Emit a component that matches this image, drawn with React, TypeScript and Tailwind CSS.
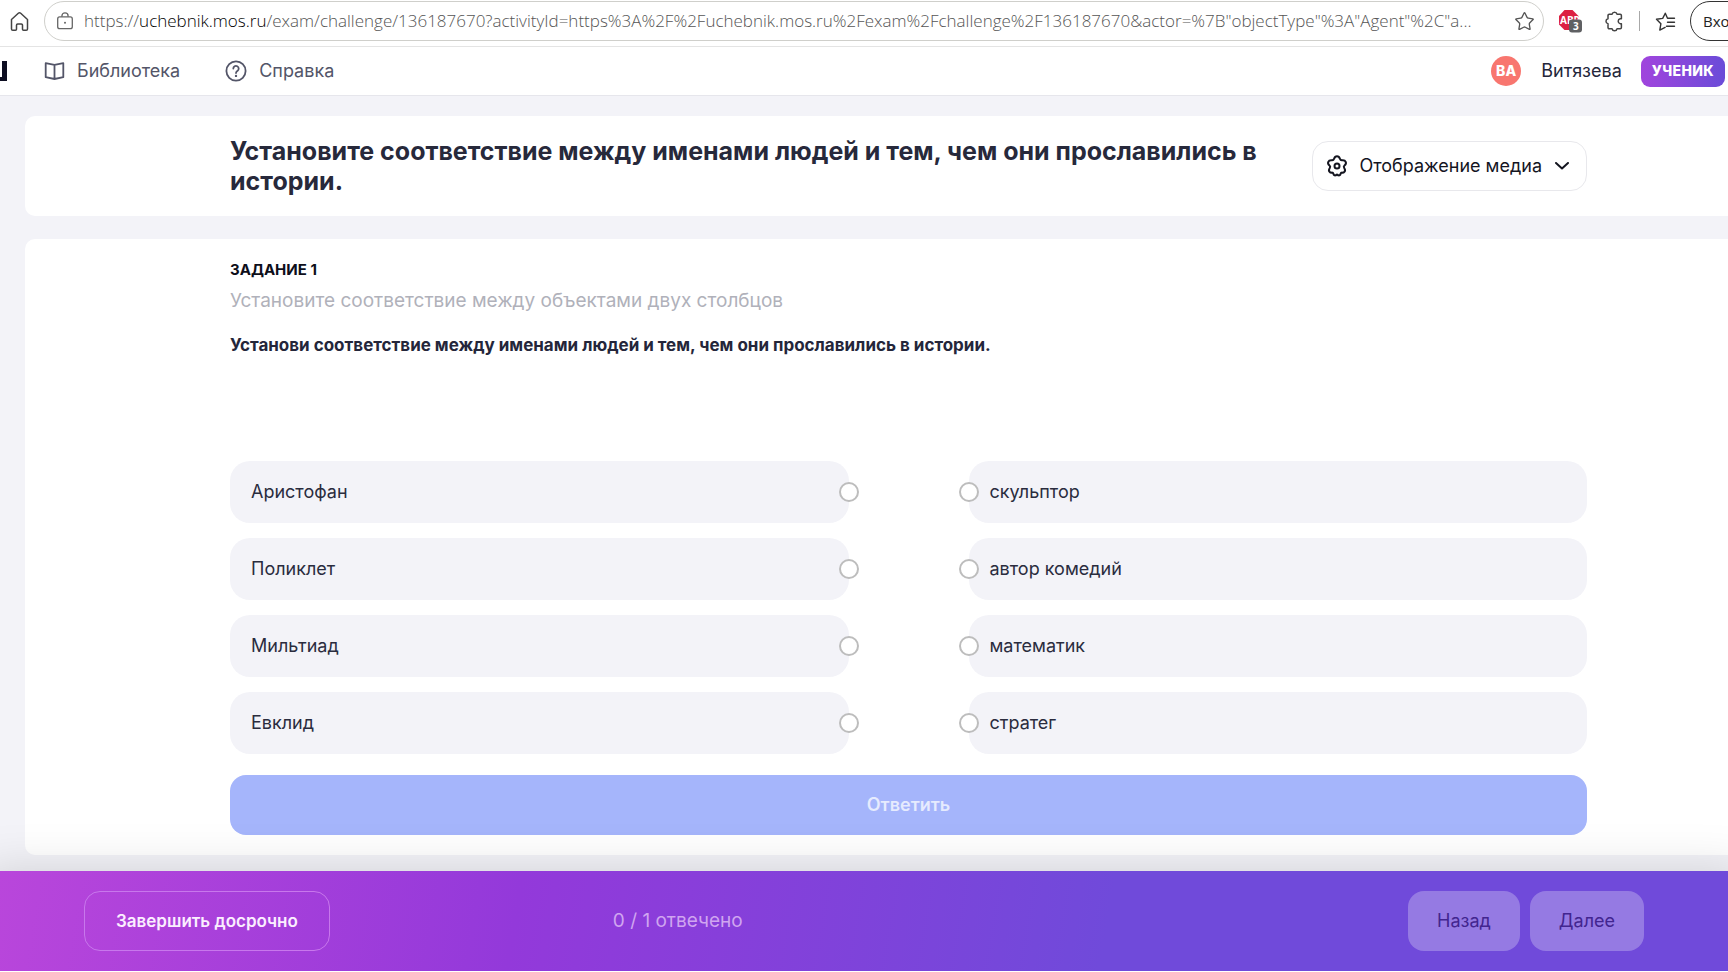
import { Star } from 'lucide-react';

const PAIRS = [
  { left: 'Аристофан', right: 'скульптор' },
  { left: 'Поликлет', right: 'автор комедий' },
  { left: 'Мильтиад', right: 'математик' },
  { left: 'Евклид', right: 'стратег' },
];

function AdblockIcon() {
  return (
    <svg viewBox="0 0 24 24" className="w-6 h-6 shrink-0">
      <path d="M6.500 1h8l6 6v8.500l-6 5.500h-8l-5.500-5.500V7z" fill="#dc2142" />
      <text x="2" y="15" fontSize="10" fontWeight="700" fill="#fff" fontFamily="Open Sans, sans-serif">ABP</text>
      <rect x="11" y="10.500" width="13" height="13" rx="3" fill="#5f6063" />
      <text x="15" y="21" fontSize="10" fontWeight="700" fill="#fff" fontFamily="Open Sans, sans-serif">3</text>
    </svg>
  );
}

function BrowserBar() {
  return (
    <div className="flex items-center h-[47px] pb-1 border-b border-[#e4e4e4] bg-white overflow-hidden font-['Open_Sans',sans-serif]">
      <button aria-label="Домой" className="ml-[9px] mr-[14px] shrink-0">
        <svg viewBox="0 0 21 21" className="w-[21px] h-[21px]" fill="none" stroke="#444" strokeWidth="1.500" strokeLinejoin="round">
          <path d="M2.500 8.500 9.300 2.300a1.800 1.800 0 0 1 2.400 0l6.800 6.200V18a1.300 1.300 0 0 1-1.300 1.300h-2.700a1 1 0 0 1-1-1v-4.100a1.200 1.200 0 0 0-1.200-1.200H8.700a1.200 1.200 0 0 0-1.200 1.200v4.100a1 1 0 0 1-1 1H3.800A1.300 1.300 0 0 1 2.500 18z" />
        </svg>
      </button>
      <div className="flex flex-1 min-w-0 items-center h-10 pl-[11px] pr-2 rounded-full border border-[#cfcfcb]">
        <svg viewBox="0 0 18 18" className="w-[18px] h-[18px] shrink-0" fill="none" stroke="#666" strokeWidth="1.300">
          <rect x="1.700" y="4.900" width="14.600" height="11.800" rx="2" />
          <path d="M5.900 4.700V3.900a3.100 3.100 0 0 1 6.200 0v.8" />
          <circle cx="9" cy="10.800" r="1" fill="#666" stroke="none" />
        </svg>
        <div role="textbox" aria-label="Адрес" className="flex-1 min-w-0 ml-[10px] text-[17px] leading-6 font-[350] whitespace-nowrap text-[#555]">
          https://<span className="text-black">uchebnik.mos.ru</span>
          {'/exam/challenge/136187670?activityId=https%3A%2F%2Fuchebnik.mos.ru%2Fexam%2Fchallenge%2F136187670&actor=%7B"objectType"%3A"Agent"%2C"a...'}
        </div>
        <button aria-label="Добавить в избранное" className="shrink-0">
          <Star className="w-[21px] h-[21px] text-[#555]" strokeWidth={1.5} />
        </button>
      </div>
      <div className="flex items-center shrink-0 ml-[14px]">
        <AdblockIcon />
        <button aria-label="Расширения" className="ml-[22px]">
          <svg viewBox="0 0 21 21" className="w-[21px] h-[21px]" fill="none" stroke="#444" strokeWidth="1.500" strokeLinejoin="round">
            <path d="M5.200 3.200h2.900a2.500 2.500 0 0 1 4.900 0h3.200a1.200 1.200 0 0 1 1.200 1.200v3.400h-1.200a2.500 2.500 0 0 0 0 4.900h1.200v3.900a1.200 1.200 0 0 1-1.200 1.200H13a2.500 2.500 0 0 1-4.900 0H5.200A1.200 1.200 0 0 1 4 16.600v-3.900a2.500 2.500 0 0 1 0-4.900V4.400a1.200 1.200 0 0 1 1.200-1.200z" />
          </svg>
        </button>
        <span className="w-px h-5 ml-[14px] mr-[14px] bg-[#a8a8a8]" />
        <button aria-label="Избранное">
          <svg viewBox="0 0 23 21" className="w-[23px] h-[21px]" fill="none" stroke="#333" strokeWidth="1.400" strokeLinejoin="round" strokeLinecap="round">
            <path d="M20.500 7.200h-7l-2.200-5-2.600 5.200-6.200.9 4.400 4.400-1.100 6.400 5.300-2.700M13.500 11.200h7M12.500 15.200h8" />
          </svg>
        </button>
        <button className="w-[120px] h-10 -mr-[82px] ml-[13px] pl-3 rounded-full border border-[#333] text-left text-[15px] text-[#222]">Вход</button>
      </div>
    </div>
  );
}

function SiteHeader() {
  return (
    <header className="flex items-center h-[49px] pr-[3px] border-b border-[#e6e6ec] bg-white text-lg text-[#535568]">
      <svg viewBox="0 0 7 20" className="w-[7px] h-5" fill="#0d0e22">
        <path d="M2 0h5v20H0v-4h2z" />
      </svg>
      <a href="#library" className="flex items-center ml-[37px] gap-3">
        <svg viewBox="0 0 21 20" className="w-[21px] h-5" fill="none" stroke="#535568" strokeWidth="1.800" strokeLinejoin="round">
          <path d="M1.700 2.200 10.500 3.800l8.800-1.600v14L10.500 18l-8.800-1.800zM10.500 3.800V18" />
        </svg>
        Библиотека
      </a>
      <a href="#help" className="flex items-center ml-[45px] gap-3">
        <svg viewBox="0 0 22 22" className="w-[22px] h-[22px]" fill="none" stroke="#535568" strokeWidth="1.800" strokeLinecap="round">
          <circle cx="11" cy="11" r="9.600" />
          <path d="M8.300 8.600a2.700 2.700 0 1 1 4.300 2.200c-1 .7-1.600 1.100-1.600 2.200" />
          <circle cx="11" cy="15.900" r="1.200" fill="#535568" stroke="none" />
        </svg>
        Справка
      </a>
      <div className="flex items-center ml-auto">
        <span className="flex items-center justify-center w-[30px] h-[30px] rounded-full bg-[#f8766f] text-white text-sm font-extrabold tracking-wide">ВА</span>
        <span className="ml-5 text-[#24263a]">Витязева</span>
        <span className="flex items-center h-[31px] ml-[19px] px-[11px] rounded-[9px] bg-linear-to-r from-[#a044dd] to-[#6a4bd8] text-white text-sm font-extrabold tracking-wide">УЧЕНИК</span>
      </div>
    </header>
  );
}

function MediaButton() {
  return (
    <button className="flex items-center shrink-0 h-[50px] px-[13px] rounded-2xl border border-[#e8e8ec] bg-white text-lg text-[#14151f]">
      <svg viewBox="0 0 22 22" className="w-[22px] h-[22px]" fill="none" stroke="#14151f" strokeWidth="2" strokeLinejoin="round">
        <path d="M8.100 3.800C8.600 2.200 9.600 1.300 11 1.300s2.400.9 2.900 2.500c.4 1.200 1 1.600 2.200 1.500 1.700-.2 3 .2 3.600 1.500.6 1.400.2 2.600-1.200 3.700-.9.800-1 1.500-.3 2.500 1 1.400 1.200 2.700.2 3.800-.6.700-1.500.9-2.300.8-.9 0-1.300.3-1.500 1.200-.3 1.300-1.200 1.800-2.200 1.500-.6-.2-.9-.8-1.400-.8s-.8.600-1.400.8c-1 .3-1.900-.2-2.200-1.500-.2-.9-.6-1.200-1.500-1.200-.8.1-1.700-.1-2.300-.8-1-1.100-.8-2.400.2-3.800.7-1 .6-1.700-.3-2.500C2.100 9.400 1.700 8.200 2.300 6.800c.6-1.300 1.900-1.700 3.600-1.500 1.200.1 1.800-.3 2.200-1.500z" />
        <circle cx="11" cy="11" r="2.500" />
      </svg>
      <span className="ml-[11px]">Отображение медиа</span>
      <svg viewBox="0 0 14 8" className="w-[14px] h-2 ml-[13px] mr-1" fill="none" stroke="#14151f" strokeWidth="2" strokeLinecap="round" strokeLinejoin="round">
        <path d="M1 1l6 5.500L13 1" />
      </svg>
    </button>
  );
}

function MatchCell({ text, side }: { text: string; side: 'left' | 'right' }) {
  return (
    <button className="relative flex items-center h-[62px] px-[21px] rounded-[20px] bg-[#f3f3f8] text-left text-lg text-[#2a2c3e]">
      {text}
      <span
        className={`absolute top-[21px] w-5 h-5 rounded-full border-2 border-[#bdbdbd] bg-white ${side === 'left' ? '-right-[10px]' : '-left-[10px]'}`}
      />
    </button>
  );
}

export default function App() {
  return (
    <div className="min-h-screen overflow-x-hidden bg-[#f3f3f8] font-['Inter',sans-serif]">
      <BrowserBar />
      <SiteHeader />
      <main className="pl-[25px] pt-5 pb-4">
        <section className="flex items-center justify-between gap-10 min-h-[100px] pl-[205px] pr-[141px] rounded-l-[10px] bg-white">
          <h1 className="text-[25px] leading-[30px] font-bold text-[#27293b]">
            Установите соответствие между именами людей и тем, чем они прославились в истории.
          </h1>
          <MediaButton />
        </section>
        <section className="mt-[23px] pt-[21px] pb-5 pl-[205px] pr-[141px] rounded-l-[10px] bg-white">
          <h2 className="text-[15px] leading-5 font-bold text-[#0d0e1a]">ЗАДАНИЕ 1</h2>
          <p className="mt-[7px] text-[19px] leading-7 text-[#b0b1ba]">Установите соответствие между объектами двух столбцов</p>
          <p className="mt-4 text-[17px] leading-7 font-bold text-[#24263a]">
            Установи соответствие между именами людей и тем, чем они прославились в истории.
          </p>
          <div className="grid grid-cols-2 gap-x-[120px] gap-y-[15px] mt-[102px]">
            {PAIRS.map((p) => [
              <MatchCell key={p.left} text={p.left} side="left" />,
              <MatchCell key={p.right} text={p.right} side="right" />,
            ])}
          </div>
          <button className="w-full h-[60px] mt-[21px] rounded-2xl bg-[#a5b5fb] text-lg font-semibold text-[#e6ebfe]">Ответить</button>
        </section>
      </main>
      <footer className="relative flex items-center h-[100px] px-[84px] bg-[linear-gradient(100deg,#b946db_0%,#9339da_30%,#704ada_64%)] shadow-[0_20px_50px_20px_rgba(0,0,0,0.15)] text-lg">
        <button className="h-[60px] px-[31px] rounded-2xl border border-[#c877ec] text-[17px] font-semibold text-[#fbeeff]">Завершить досрочно</button>
        <span className="ml-[283px] text-[19px] text-[#d0a5f0]">0 / 1 отвечено</span>
        <div className="flex gap-[10px] ml-auto">
          <button className="h-[60px] px-[29px] rounded-2xl bg-[#957ae3] text-[#42258f]">Назад</button>
          <button className="h-[60px] px-[29px] rounded-2xl bg-[#957ae3] text-[#42258f]">Далее</button>
        </div>
      </footer>
      <div className="relative h-px bg-white" />
    </div>
  );
}
